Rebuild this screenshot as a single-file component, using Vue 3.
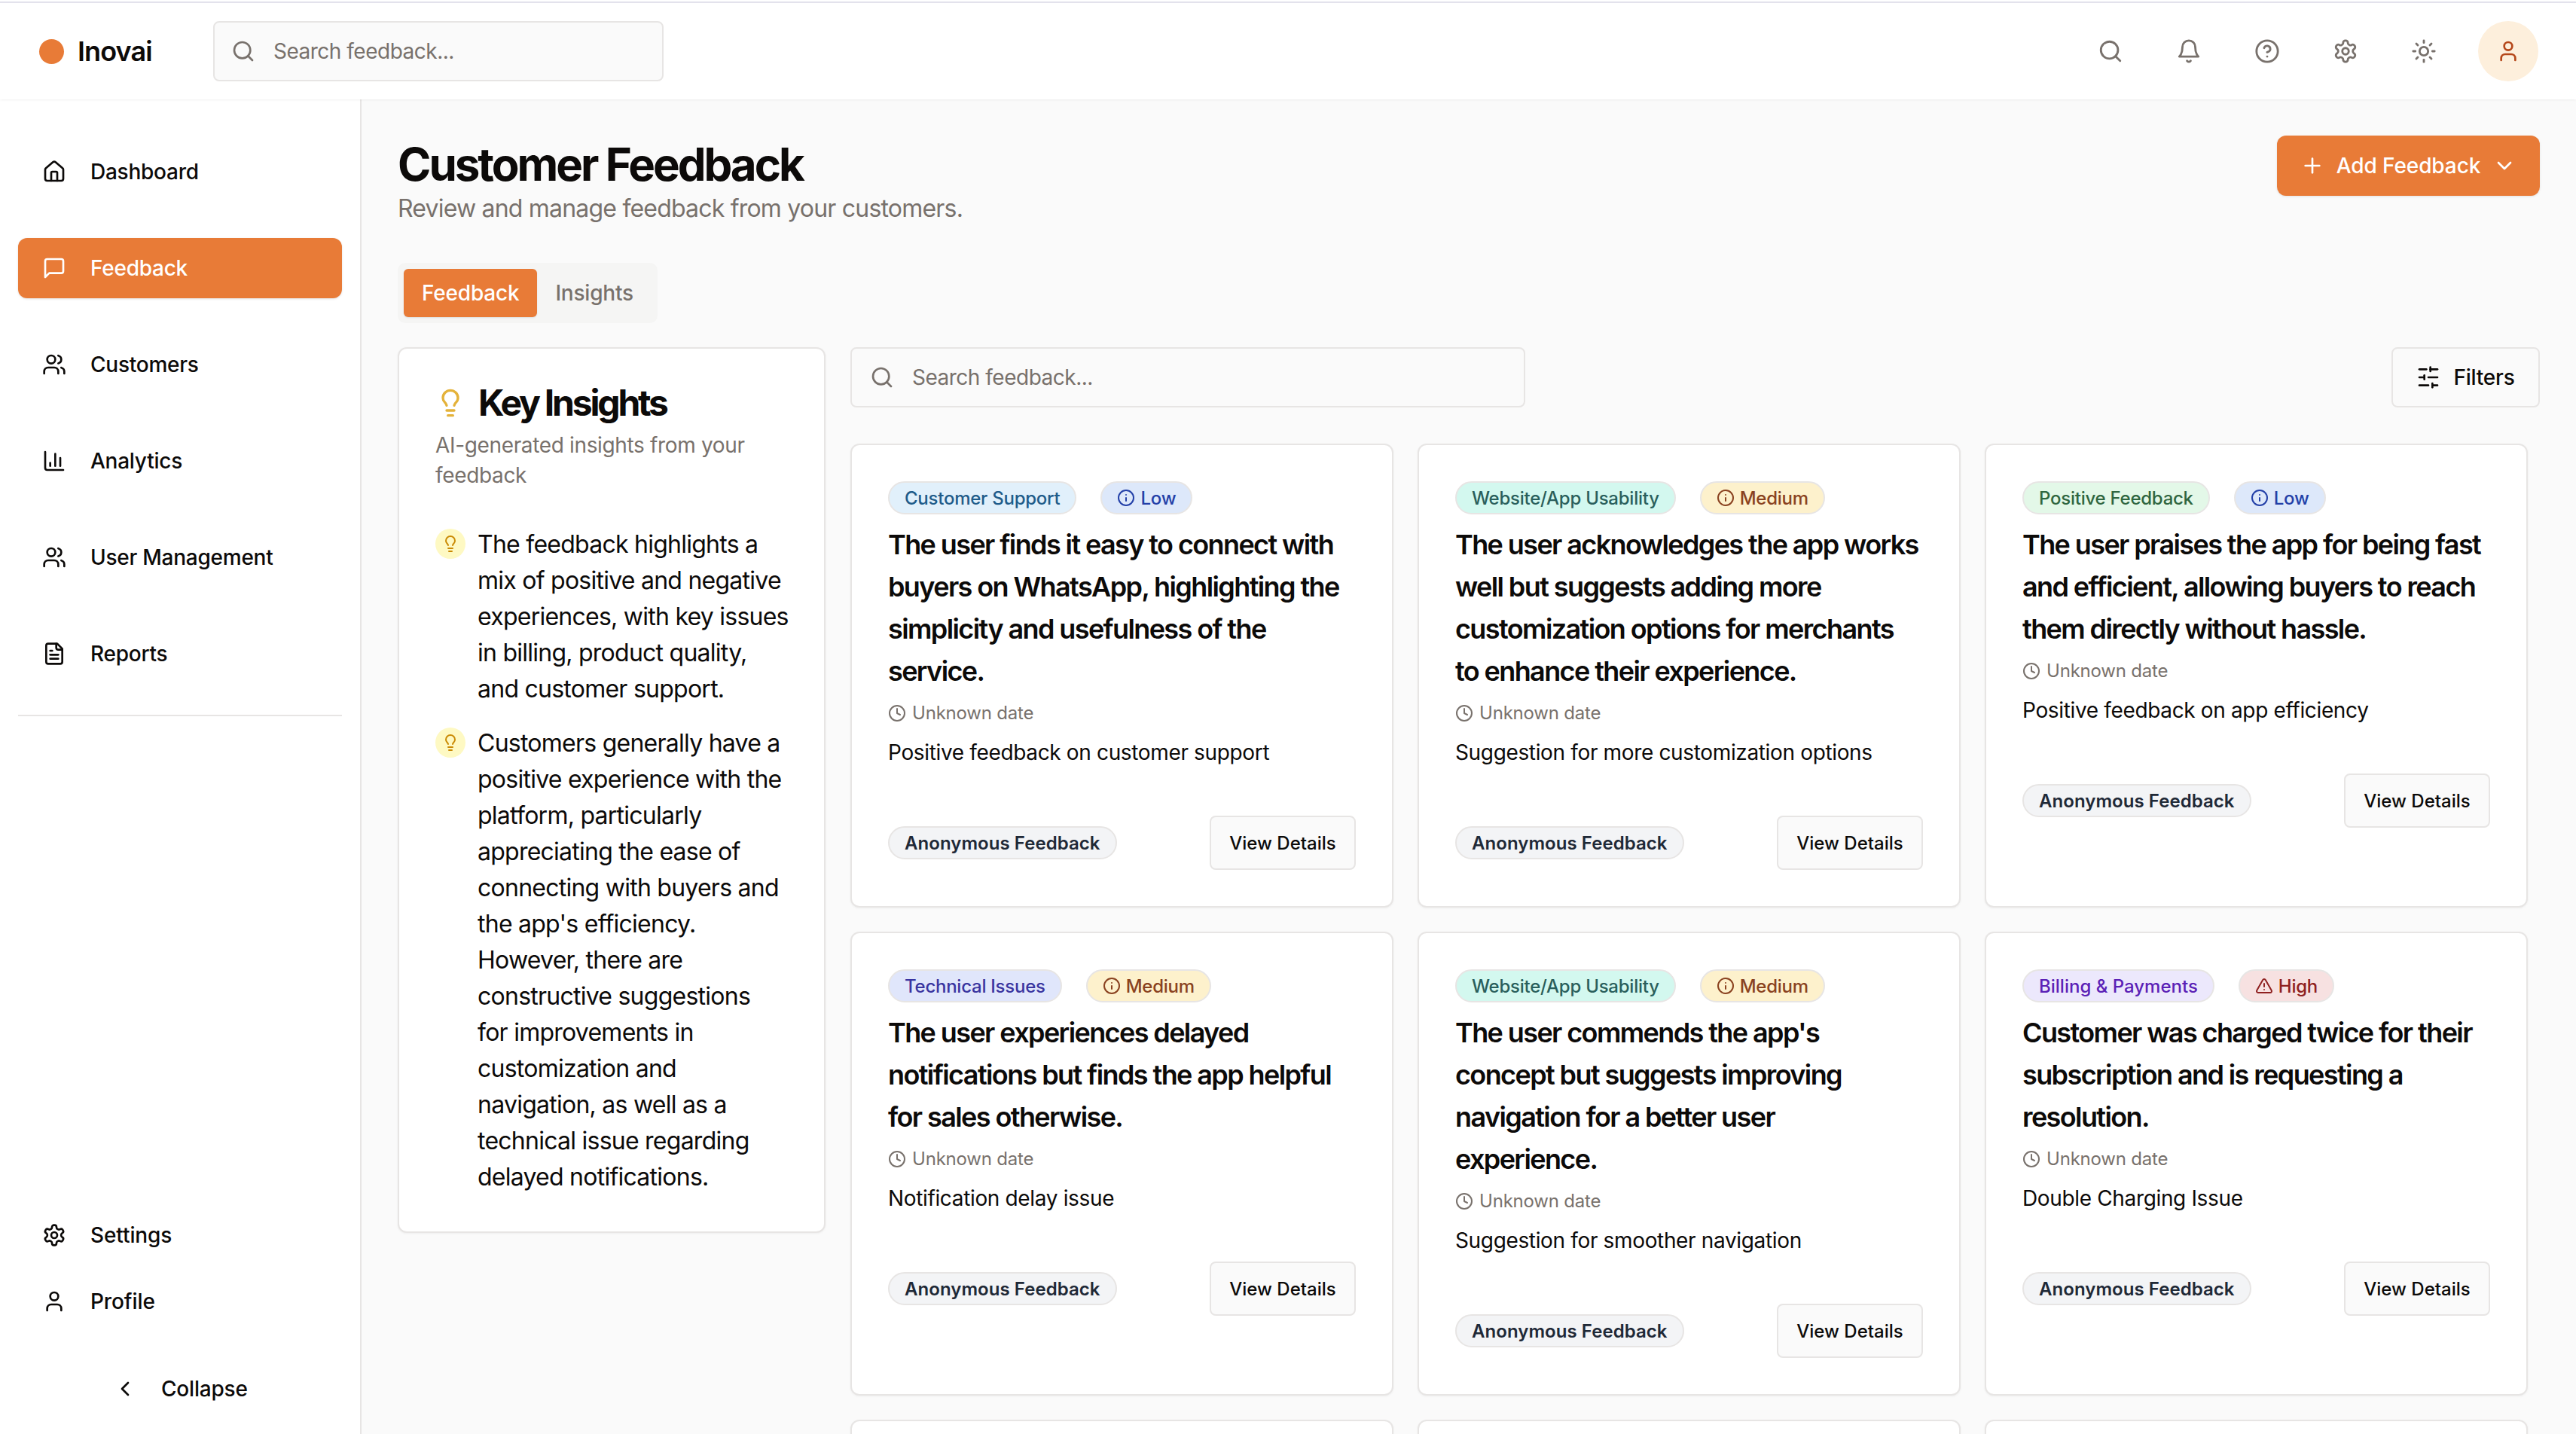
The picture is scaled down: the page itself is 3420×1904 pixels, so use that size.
<template>
  <div class="app">
    <header class="topbar">
      <div class="brand">
        <span class="brand-dot"></span>
        <span class="brand-name">Inovai</span>
      </div>
      <label class="top-search">
        <svg class="ico ico-search" viewBox="0 0 24 24"><circle cx="11" cy="11" r="8" /><path d="m21 21-4.3-4.3" /></svg>
        <span>Search feedback...</span>
      </label>
      <div class="top-actions">
        <button v-for="a in topActions" :key="a" class="icon-btn">
          <svg class="ico" viewBox="0 0 24 24"><path v-for="d in icons[a]" :key="d" :d="d" /></svg>
        </button>
        <button class="avatar">
          <svg class="ico" viewBox="0 0 24 24"><path v-for="d in icons.user" :key="d" :d="d" /></svg>
        </button>
      </div>
    </header>

    <div class="body">
      <aside class="sidebar">
        <nav class="nav">
          <a v-for="n in navItems" :key="n.label" class="nav-item" :class="{ active: n.active }">
            <svg class="ico" viewBox="0 0 24 24"><path v-for="d in icons[n.icon]" :key="d" :d="d" /></svg>
            <span>{{ n.label }}</span>
          </a>
        </nav>
        <div class="side-rule"></div>
        <div class="side-bottom">
          <a v-for="n in bottomItems" :key="n.label" class="bottom-item">
            <svg class="ico" viewBox="0 0 24 24"><path v-for="d in icons[n.icon]" :key="d" :d="d" /></svg>
            <span>{{ n.label }}</span>
          </a>
          <button class="collapse">
            <svg class="ico" viewBox="0 0 24 24"><path d="m15 18-6-6 6-6" /></svg>
            <span>Collapse</span>
          </button>
        </div>
      </aside>

      <main class="main">
        <div class="page-head">
          <div>
            <h1>Customer Feedback</h1>
            <p>Review and manage feedback from your customers.</p>
          </div>
          <button class="add-btn">
            <svg class="ico" viewBox="0 0 24 24"><path d="M5 12h14" /><path d="M12 5v14" /></svg>
            <span>Add Feedback</span>
            <svg class="ico" viewBox="0 0 24 24"><path d="m6 9 6 6 6-6" /></svg>
          </button>
        </div>

        <div class="tabs">
          <button class="tab on">Feedback</button>
          <button class="tab">Insights</button>
        </div>

        <div class="columns">
          <section class="insights">
            <div class="insights-title">
              <svg class="ico" viewBox="0 0 24 24"><path v-for="d in icons.bulb" :key="d" :d="d" /></svg>
              <h2>Key Insights</h2>
            </div>
            <p class="insights-sub">AI-generated insights from your feedback</p>
            <ul class="insights-list">
              <li v-for="t in insights" :key="t">
                <span class="bullet">
                  <svg class="ico" viewBox="0 0 24 24"><path v-for="d in icons.bulb" :key="d" :d="d" /></svg>
                </span>
                <span class="insight-text">{{ t }}</span>
              </li>
            </ul>
          </section>

          <section class="feed">
            <div class="feed-bar">
              <label class="feed-search">
                <svg class="ico" viewBox="0 0 24 24"><circle cx="11" cy="11" r="8" /><path d="m21 21-4.3-4.3" /></svg>
                <span>Search feedback...</span>
              </label>
              <button class="filters">
                <svg class="ico" viewBox="0 0 24 24"><path v-for="d in icons.sliders" :key="d" :d="d" /></svg>
                <span>Filters</span>
              </button>
            </div>

            <div class="grid">
              <article v-for="c in cards" :key="c.title" class="card">
                <div class="badges">
                  <span class="badge" :class="c.cat">{{ c.category }}</span>
                  <span class="badge" :class="c.level">
                    <svg class="ico" viewBox="0 0 24 24"><path v-for="d in levelIcons[c.level]" :key="d" :d="d" /></svg>
                    {{ levelNames[c.level] }}
                  </span>
                </div>
                <h3>{{ c.title }}</h3>
                <div class="date">
                  <svg class="ico" viewBox="0 0 24 24"><circle cx="12" cy="12" r="10" /><path d="M12 6v6l4 2" /></svg>
                  <span>Unknown date</span>
                </div>
                <p class="desc">{{ c.desc }}</p>
                <div class="card-foot">
                  <span class="badge anon">Anonymous Feedback</span>
                  <button class="details">View Details</button>
                </div>
              </article>
              <div v-for="n in 3" :key="n" class="card stub"></div>
            </div>
          </section>
        </div>
      </main>
    </div>
  </div>
</template>

<script setup>
const gear = 'M12.22 2h-.44a2 2 0 0 0-2 2v.18a2 2 0 0 1-1 1.73l-.43.25a2 2 0 0 1-2 0l-.15-.08a2 2 0 0 0-2.73.73l-.22.38a2 2 0 0 0 .73 2.73l.15.1a2 2 0 0 1 1 1.72v.51a2 2 0 0 1-1 1.74l-.15.09a2 2 0 0 0-.73 2.73l.22.38a2 2 0 0 0 2.73.73l.15-.08a2 2 0 0 1 2 0l.43.25a2 2 0 0 1 1 1.73V20a2 2 0 0 0 2 2h.44a2 2 0 0 0 2-2v-.18a2 2 0 0 1 1-1.73l.43-.25a2 2 0 0 1 2 0l.15.08a2 2 0 0 0 2.73-.73l.22-.39a2 2 0 0 0-.73-2.73l-.15-.08a2 2 0 0 1-1-1.74v-.5a2 2 0 0 1 1-1.74l.15-.09a2 2 0 0 0 .73-2.73l-.22-.38a2 2 0 0 0-2.73-.73l-.15.08a2 2 0 0 1-2 0l-.43-.25a2 2 0 0 1-1-1.73V4a2 2 0 0 0-2-2z'
const gearHole = 'M15 12a3 3 0 1 1-6 0 3 3 0 0 1 6 0z'

const icons = {
  search: ['M19 11a8 8 0 1 1-16 0 8 8 0 0 1 16 0z', 'm21 21-4.3-4.3'],
  bell: ['M6 8a6 6 0 0 1 12 0c0 7 3 9 3 9H3s3-2 3-9', 'M10.3 21a1.94 1.94 0 0 0 3.4 0'],
  help: ['M22 12a10 10 0 1 1-20 0 10 10 0 0 1 20 0z', 'M9.09 9a3 3 0 0 1 5.83 1c0 2-3 3-3 3', 'M12 17h.01'],
  settings: [gear, gearHole],
  sun: ['M16 12a4 4 0 1 1-8 0 4 4 0 0 1 8 0z', 'M12 2v2', 'M12 20v2', 'm4.93 4.93 1.41 1.41', 'm17.66 17.66 1.41 1.41', 'M2 12h2', 'M20 12h2', 'm6.34 17.66-1.41 1.41', 'm19.07 4.93-1.41 1.41'],
  user: ['M19 21v-2a4 4 0 0 0-4-4H9a4 4 0 0 0-4 4v2', 'M16 7a4 4 0 1 1-8 0 4 4 0 0 1 8 0z'],
  home: ['M15 21v-8a1 1 0 0 0-1-1h-4a1 1 0 0 0-1 1v8', 'M3 10a2 2 0 0 1 .709-1.528l7-5.999a2 2 0 0 1 2.582 0l7 5.999A2 2 0 0 1 21 10v9a2 2 0 0 1-2 2H5a2 2 0 0 1-2-2z'],
  message: ['M21 15a2 2 0 0 1-2 2H7l-4 4V5a2 2 0 0 1 2-2h14a2 2 0 0 1 2 2z'],
  users: ['M16 21v-2a4 4 0 0 0-4-4H6a4 4 0 0 0-4 4v2', 'M13 7a4 4 0 1 1-8 0 4 4 0 0 1 8 0z', 'M22 21v-2a4 4 0 0 0-3-3.87', 'M16 3.13a4 4 0 0 1 0 7.75'],
  chart: ['M3 3v16a2 2 0 0 0 2 2h16', 'M18 17V9', 'M13 17V5', 'M8 17v-3'],
  file: ['M15 2H6a2 2 0 0 0-2 2v16a2 2 0 0 0 2 2h12a2 2 0 0 0 2-2V7z', 'M14 2v4a2 2 0 0 0 2 2h4', 'M10 9H8', 'M16 13H8', 'M16 17H8'],
  bulb: ['M15 14c.2-1 .7-1.7 1.5-2.5 1-.9 1.5-2.2 1.5-3.5A6 6 0 0 0 6 8c0 1 .2 2.2 1.5 3.5.7.7 1.3 1.5 1.5 2.5', 'M9 18h6', 'M10 22h4'],
  sliders: ['M21 4h-7', 'M10 4H3', 'M21 12h-9', 'M8 12H3', 'M21 20h-5', 'M12 20H3', 'M14 2v4', 'M8 10v4', 'M16 18v4']
}

const levelIcons = {
  low: ['M22 12a10 10 0 1 1-20 0 10 10 0 0 1 20 0z', 'M12 16v-4', 'M12 8h.01'],
  medium: ['M22 12a10 10 0 1 1-20 0 10 10 0 0 1 20 0z', 'M12 16v-4', 'M12 8h.01'],
  high: ['m21.73 18-8-14a2 2 0 0 0-3.48 0l-8 14A2 2 0 0 0 4 21h16a2 2 0 0 0 1.73-3', 'M12 9v4', 'M12 17h.01']
}
const levelNames = { low: 'Low', medium: 'Medium', high: 'High' }

const topActions = ['search', 'bell', 'help', 'settings', 'sun']

const navItems = [
  { label: 'Dashboard', icon: 'home' },
  { label: 'Feedback', icon: 'message', active: true },
  { label: 'Customers', icon: 'users' },
  { label: 'Analytics', icon: 'chart' },
  { label: 'User Management', icon: 'users' },
  { label: 'Reports', icon: 'file' }
]
const bottomItems = [
  { label: 'Settings', icon: 'settings' },
  { label: 'Profile', icon: 'user' }
]

// line breaks kept by hand, Inter here runs a bit wider than in the reference
const insights = [
  'The feedback highlights a\nmix of positive and negative\nexperiences, with key issues\nin billing, product quality,\nand customer support.',
  "Customers generally have a\npositive experience with the\nplatform, particularly\nappreciating the ease of\nconnecting with buyers and\nthe app's efficiency.\nHowever, there are\nconstructive suggestions\nfor improvements in\ncustomization and\nnavigation, as well as a\ntechnical issue regarding\ndelayed notifications."
]

const cards = [
  { category: 'Customer Support', cat: 'support', level: 'low', title: 'The user finds it easy to connect with buyers on WhatsApp, highlighting the simplicity and usefulness of the service.', desc: 'Positive feedback on customer support' },
  { category: 'Website/App Usability', cat: 'usability', level: 'medium', title: 'The user acknowledges the app works well but suggests adding more customization options for merchants to enhance their experience.', desc: 'Suggestion for more customization options' },
  { category: 'Positive Feedback', cat: 'positive', level: 'low', title: 'The user praises the app for being fast and efficient, allowing buyers to reach them directly without hassle.', desc: 'Positive feedback on app efficiency' },
  { category: 'Technical Issues', cat: 'technical', level: 'medium', title: 'The user experiences delayed notifications but finds the app helpful for sales otherwise.', desc: 'Notification delay issue' },
  { category: 'Website/App Usability', cat: 'usability', level: 'medium', title: "The user commends the app's concept but suggests improving navigation for a better user experience.", desc: 'Suggestion for smoother navigation' },
  { category: 'Billing & Payments', cat: 'billing', level: 'high', title: 'Customer was charged twice for their subscription and is requesting a resolution.', desc: 'Double Charging Issue' }
]
</script>

<style>
html, body {
  margin: 0;
  background: #fafafa;
}
</style>

<style scoped>
.app {
  height: 1904px;
  box-sizing: border-box;
  padding-top: 2px;
  overflow: hidden;
  display: flex;
  flex-direction: column;
  font-family: Inter, "Liberation Sans", sans-serif;
  color: #0c0a09;
  background: #fff;
}
button {
  font-family: inherit;
  cursor: pointer;
}
.ico {
  fill: none;
  stroke: currentColor;
  stroke-width: 2;
  stroke-linecap: round;
  stroke-linejoin: round;
  flex: none;
}

.topbar {
  height: 128px;
  flex: none;
  display: flex;
  align-items: center;
  background: #fff;
  border-top: 2px solid #e3e2ec;
  box-shadow: 0 1px 3px rgba(0, 0, 0, 0.06);
  padding: 0 50px 0 52px;
  position: relative;
  z-index: 2;
  box-sizing: content-box;
}
.brand {
  display: flex;
  align-items: center;
  gap: 18px;
  width: 231px;
}
.brand-dot {
  width: 33px;
  height: 33px;
  border-radius: 50%;
  background: #e87b37;
}
.brand-name {
  font-size: 36px;
  font-weight: 600;
  letter-spacing: -0.9px;
}
.top-search {
  width: 598px;
  height: 80px;
  box-sizing: border-box;
  display: flex;
  align-items: center;
  gap: 24px;
  padding-left: 22px;
  border: 2px solid #e7e5e4;
  border-radius: 8px;
  background: #fafafa;
  font-size: 28px;
  letter-spacing: -0.5px;
  color: #78716c;
}
.top-search .ico, .feed-search .ico {
  width: 32px;
  height: 32px;
}
.top-actions {
  margin-left: auto;
  display: flex;
  align-items: center;
  gap: 24px;
}
.icon-btn {
  width: 80px;
  height: 80px;
  border: 0;
  padding: 0;
  background: none;
  color: #78716c;
  display: flex;
  align-items: center;
  justify-content: center;
}
.icon-btn .ico {
  width: 34px;
  height: 34px;
}
.avatar {
  width: 80px;
  height: 80px;
  margin-left: 8px;
  border: 0;
  padding: 0;
  border-radius: 50%;
  background: #fdefdc;
  color: #b5471a;
  display: flex;
  align-items: center;
  justify-content: center;
}
.avatar .ico {
  width: 32px;
  height: 32px;
}

.body {
  flex: 1;
  min-height: 0;
  display: flex;
  background: #fafafa;
}
.sidebar {
  width: 480px;
  flex: none;
  box-sizing: border-box;
  background: #fff;
  border-right: 2px solid #e7e5e4;
  padding: 0 24px;
  display: flex;
  flex-direction: column;
}
.nav {
  padding-top: 56px;
  display: flex;
  flex-direction: column;
  gap: 48px;
}
.nav-item {
  height: 80px;
  display: flex;
  align-items: center;
  gap: 32px;
  padding-left: 32px;
  border-radius: 12px;
  font-size: 28px;
  font-weight: 500;
  letter-spacing: -0.25px;
}
.nav-item .ico, .bottom-item .ico {
  width: 32px;
  height: 32px;
}
.nav-item.active {
  background: #e87b37;
  color: #fff;
  box-shadow: 0 1px 3px rgba(0, 0, 0, 0.12);
}
.side-rule {
  margin-top: 41px;
  height: 2px;
  background: #e7e5e4;
}
.side-bottom {
  margin-top: auto;
  padding-bottom: 36px;
  display: flex;
  flex-direction: column;
}
.bottom-item {
  height: 88px;
  display: flex;
  align-items: center;
  gap: 32px;
  padding-left: 32px;
  font-size: 28px;
  font-weight: 500;
  letter-spacing: -0.1px;
}
.collapse {
  margin-top: 48px;
  height: 48px;
  border: 0;
  padding: 0 0 0 126px;
  background: none;
  display: flex;
  align-items: center;
  gap: 32px;
  font-size: 28px;
  font-weight: 500;
  letter-spacing: -0.2px;
  color: #0c0a09;
}
.collapse .ico {
  width: 32px;
  height: 32px;
}

.main {
  flex: 1;
  min-width: 0;
  padding: 48px 48px 0;
  overflow: hidden;
}
.page-head {
  display: flex;
  justify-content: space-between;
  align-items: flex-start;
}
.page-head h1 {
  margin: 2px 0 0;
  font-size: 60px;
  line-height: 72px;
  font-weight: 700;
  letter-spacing: -3px;
}
.page-head p {
  margin: -1px 0 0;
  font-size: 32px;
  line-height: 48px;
  letter-spacing: -0.8px;
  color: #78716c;
}
.add-btn {
  width: 349px;
  height: 80px;
  border: 0;
  border-radius: 12px;
  background: #e87b37;
  color: #fff;
  display: flex;
  align-items: center;
  justify-content: center;
  gap: 16px;
  font-size: 28px;
  font-weight: 500;
  letter-spacing: -0.1px;
  box-shadow: 0 1px 3px rgba(0, 0, 0, 0.1);
}
.add-btn .ico {
  width: 32px;
  height: 32px;
}

.tabs {
  margin-top: 48px;
  width: fit-content;
  height: 80px;
  box-sizing: border-box;
  padding: 8px;
  display: flex;
  border-radius: 10px;
  background: #f5f5f4;
}
.tab {
  height: 64px;
  padding: 0 24px;
  border: 0;
  border-radius: 6px;
  background: none;
  font-size: 28px;
  font-weight: 500;
  letter-spacing: -0.2px;
  color: #78716c;
}
.tab.on {
  background: #e87b37;
  color: #fff;
  box-shadow: 0 1px 2px rgba(0, 0, 0, 0.1);
}

.columns {
  margin-top: 32px;
  display: flex;
  align-items: flex-start;
  gap: 33px;
}
.insights {
  width: 568px;
  flex: none;
  box-sizing: border-box;
  padding: 48px;
  background: #fff;
  border: 2px solid #e7e5e4;
  border-radius: 12px;
  box-shadow: 0 1px 3px rgba(0, 0, 0, 0.05);
}
.insights-title {
  display: flex;
  align-items: center;
  gap: 17px;
}
.insights-title .ico {
  width: 40px;
  height: 40px;
  color: #e4b23a;
}
.insights-title h2 {
  margin: 0;
  font-size: 48px;
  line-height: 48px;
  font-weight: 700;
  letter-spacing: -3.2px;
}
.insights-sub {
  margin: 12px 0 0;
  font-size: 28px;
  line-height: 40px;
  letter-spacing: -0.35px;
  color: #78716c;
}
.insights-list {
  list-style: none;
  margin: 48px 0 0;
  padding: 0;
  display: flex;
  flex-direction: column;
  gap: 24px;
  font-size: 32px;
  line-height: 48px;
  letter-spacing: -0.75px;
}
.insights-list li {
  display: flex;
  gap: 16px;
}
.insight-text {
  white-space: pre;
}
.bullet {
  width: 40px;
  height: 40px;
  flex: none;
  margin-top: 3px;
  border-radius: 50%;
  background: #fef9c3;
  color: #ca8a04;
  display: flex;
  align-items: center;
  justify-content: center;
}
.bullet .ico {
  width: 24px;
  height: 24px;
}

.feed {
  flex: 1;
  min-width: 0;
}
.feed-bar {
  display: flex;
  justify-content: space-between;
}
.feed-search {
  width: 896px;
  height: 80px;
  box-sizing: border-box;
  display: flex;
  align-items: center;
  gap: 24px;
  padding-left: 24px;
  border: 2px solid #e7e5e4;
  border-radius: 8px;
  background: #fafafa;
  font-size: 28px;
  letter-spacing: -0.5px;
  color: #78716c;
}
.filters {
  width: 197px;
  height: 80px;
  box-sizing: border-box;
  border: 2px solid #e7e5e4;
  border-radius: 8px;
  background: #fafafa;
  display: flex;
  align-items: center;
  justify-content: center;
  gap: 17px;
  font-size: 28px;
  font-weight: 500;
  letter-spacing: -0.2px;
  color: #0c0a09;
}
.filters .ico {
  width: 32px;
  height: 32px;
}

.grid {
  margin-top: 48px;
  padding-right: 16px;
  display: grid;
  grid-template-columns: repeat(3, minmax(0, 1fr));
  gap: 32px;
}
.card {
  box-sizing: border-box;
  padding: 48px;
  background: #fff;
  border: 2px solid #e7e5e4;
  border-radius: 12px;
  box-shadow: 0 1px 3px rgba(0, 0, 0, 0.05);
  display: flex;
  flex-direction: column;
  align-items: stretch;
}
.card.stub {
  height: 300px;
}
.badges {
  display: flex;
  gap: 32px;
}
.badge {
  height: 44px;
  box-sizing: border-box;
  display: inline-flex;
  align-items: center;
  gap: 7px;
  padding: 0 20px;
  border: 2px solid #e7e5e4;
  border-radius: 22px;
  font-size: 24px;
  font-weight: 500;
  letter-spacing: -0.25px;
}
.badge .ico {
  width: 24px;
  height: 24px;
}
.support { background: #e1f0fb; color: #1f5c8a; }
.usability { background: #d3f8ef; color: #2a5f5c; }
.positive { background: #e3f8e8; color: #2f6640; }
.technical { background: #e0e6fb; color: #3a35a0; }
.billing { background: #ece8fc; color: #5b21b6; letter-spacing: 0; }
.low { background: #dde8fa; color: #2340a8; }
.medium { background: #fdf1cc; color: #8a4220; }
.high { background: #f7e1e1; color: #8f2020; }
.anon {
  background: #f3f4f6;
  color: #1f2937;
  font-weight: 600;
  letter-spacing: 0.05px;
}
.card h3 {
  margin: 12px 0 0;
  padding-right: 3px;
  font-size: 36px;
  line-height: 56px;
  font-weight: 600;
  letter-spacing: -1.6px;
}
.date {
  margin-top: 12px;
  display: flex;
  align-items: center;
  gap: 8px;
  font-size: 24px;
  line-height: 32px;
  letter-spacing: -0.2px;
  color: #78716c;
}
.date .ico {
  width: 24px;
  height: 24px;
}
.desc {
  margin: 16px 0 0;
  font-size: 28px;
  line-height: 40px;
  letter-spacing: -0.35px;
}
.card-foot {
  margin-top: 64px;
  display: flex;
  align-items: center;
  justify-content: space-between;
}
.details {
  width: 194px;
  height: 72px;
  box-sizing: border-box;
  border: 2px solid #e7e5e4;
  border-radius: 8px;
  background: #fafafa;
  font-size: 24px;
  font-weight: 500;
  color: #0c0a09;
}
</style>
